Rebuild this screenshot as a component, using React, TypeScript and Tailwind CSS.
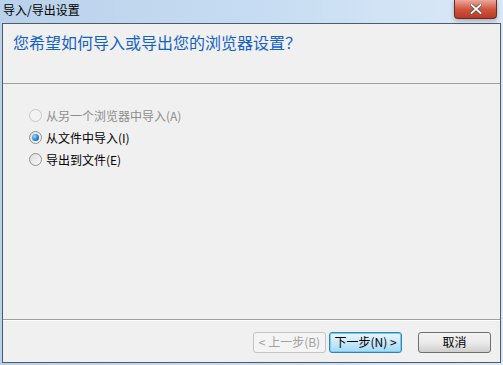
import React from 'react';

const font = { fontFamily: '"Noto Sans CJK SC", "Liberation Sans", sans-serif' };

function Radio({ checked, disabled }: { checked?: boolean; disabled?: boolean }) {
  return (
    <span
      className={`relative flex h-[13px] w-[13px] items-center justify-center rounded-full border ${
        disabled
          ? 'border-[#c8c8c8] bg-[#f2f2f2]'
          : 'border-[#8e8f8f] bg-gradient-to-br from-[#dcdcdc] to-[#fafafa]'
      }`}
    >
      {checked && (
        <span className="h-[7px] w-[7px] rounded-full bg-[radial-gradient(circle_at_35%_35%,#9ad7ff,#1f78d0_60%,#0c4f9a)]" />
      )}
    </span>
  );
}

function Btn({ children, disabled, focused }: { children: React.ReactNode; disabled?: boolean; focused?: boolean }) {
  return (
    <button
      className={`flex h-[21px] w-[73px] items-center justify-center rounded-[3px] border text-[12px] ${
        disabled
          ? 'border-[#c4c4c4] bg-[#f4f4f4] text-[#a0a0a0]'
          : focused
          ? 'border-[#3c7fb1] bg-gradient-to-b from-[#eaf6fd] to-[#a7d9f5] text-black shadow-[inset_0_0_0_1px_#6ad0f8]'
          : 'border-[#707070] bg-gradient-to-b from-[#f2f2f2] via-[#ebebeb] to-[#cfcfcf] text-black'
      }`}
    >
      {children}
    </button>
  );
}

export default function App() {
  return (
    <div className="flex h-[365px] w-[503px] flex-col bg-gradient-to-r from-[#b9d1ea] via-[#c6dcf2] to-[#dbe9f7]" style={font}>
      <div className="relative flex h-[23px] shrink-0 items-start px-[3px] pt-[2px]">
        <span className="text-[12px] leading-[16px] text-black">导入/导出设置</span>
        <div className="absolute right-[6px] top-0 flex h-[19px] w-[43px] items-center justify-center rounded-b-[4px] border border-t-0 border-[#6d2a22] bg-gradient-to-b from-[#e9a99b] via-[#d2553f] to-[#b93a24] shadow-[0_2px_4px_rgba(0,0,0,0.25)]">
          <svg width="12" height="10" viewBox="0 0 12 10">
            <path d="M1.5 1 L10.5 9 M10.5 1 L1.5 9" stroke="#4a4a4a" strokeWidth="3.2" strokeLinecap="square" />
            <path d="M1.5 1 L10.5 9 M10.5 1 L1.5 9" stroke="#ffffff" strokeWidth="1.8" strokeLinecap="square" />
          </svg>
        </div>
      </div>
      <div className="mx-[2px] mb-[2px] flex flex-1 flex-col border border-[#4d5b6b] bg-[#f0f0f0]">
        <div className="flex h-[60px] shrink-0 items-start border-b border-[#a0a0a0] px-[10px] pt-[8px]">
          <span className="text-[16px] leading-[20px] text-[#1260c8]">您希望如何导入或导出您的浏览器设置？</span>
        </div>
        <div className="flex flex-1 flex-col px-[26px] pt-[20px] text-[12px] leading-[13px]">
          <label className="flex h-[22px] items-center gap-[4px] text-[#8d8d8d]">
            <Radio disabled />
            <span>从另一个浏览器中导入(A)</span>
          </label>
          <label className="flex h-[22px] items-center gap-[4px] text-black">
            <Radio checked />
            <span>从文件中导入(I)</span>
          </label>
          <label className="flex h-[22px] items-center gap-[4px] text-black">
            <Radio />
            <span>导出到文件(E)</span>
          </label>
        </div>
        <div className="flex h-[43px] shrink-0 items-center justify-end gap-[3px] border-t border-[#a0a0a0] pr-[9px] pt-[2px] shadow-[inset_0_1px_0_#fff]">
          <Btn disabled>&lt; 上一步(B)</Btn>
          <Btn focused>下一步(N) &gt;</Btn>
          <div className="w-[10px]" />
          <Btn>取消</Btn>
        </div>
      </div>
    </div>
  );
}
